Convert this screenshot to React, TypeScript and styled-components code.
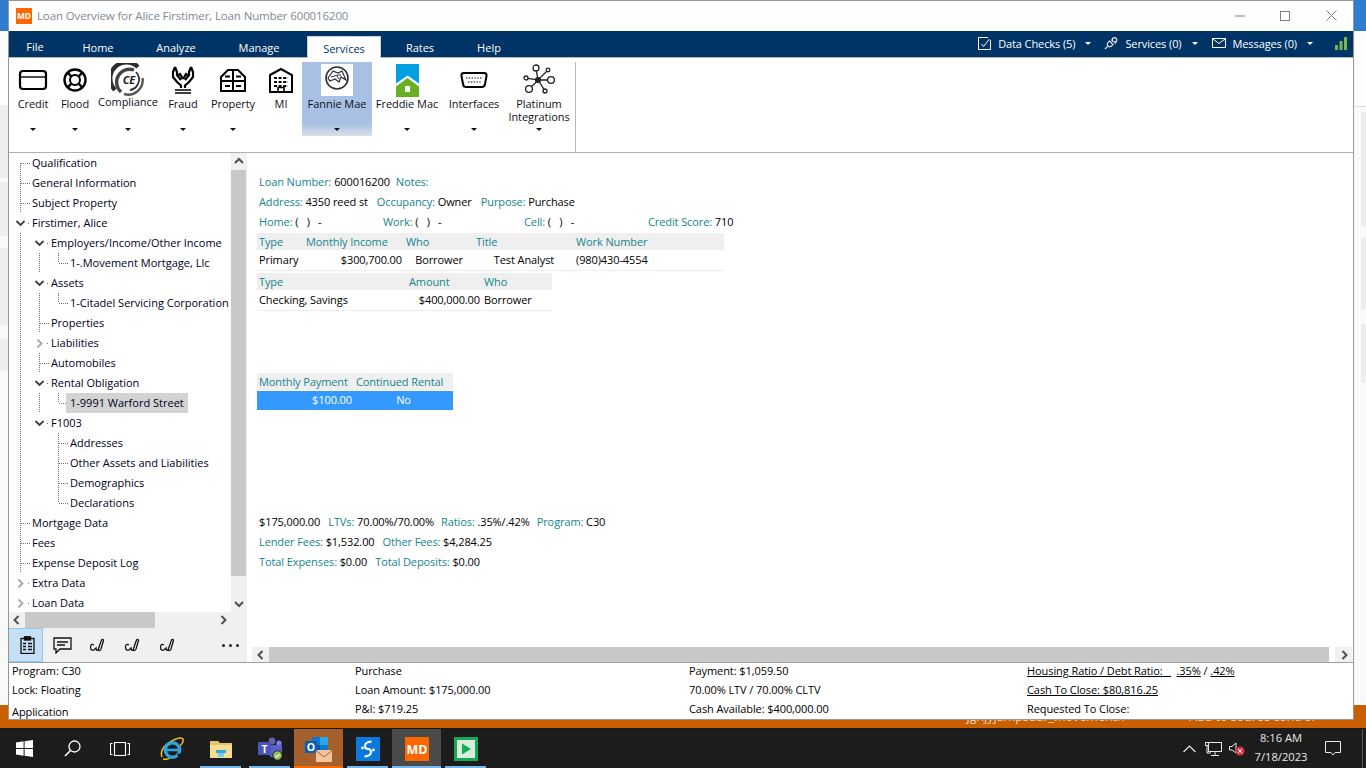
import React from "react";
import styled, { createGlobalStyle } from "styled-components";

const GlobalStyle = createGlobalStyle`
  html, body { margin: 0; padding: 0; background: #1c1c1c; overflow: hidden; }
  * { box-sizing: border-box; }
`;

const FONT = `"Open Sans", "Noto Sans", sans-serif`;
const TEAL = "#13858e";
const NAVY = "#003466";

const Screen = styled.div`
  width: 1366px;
  height: 768px;
  display: flex;
  flex-direction: column;
  font-family: ${FONT};
  font-size: 11px;
  color: #000;
  overflow: hidden;
`;

const Desktop = styled.div`
  height: 728px;
  display: flex;
`;

const Edge = styled.div<{ $w: number }>`
  width: ${(p) => p.$w}px;
  display: flex;
  flex-direction: column;
  background: #f8f9f9;
`;

const EdgeBlock = styled.div<{ $h: number; $bg: string; $inset?: number }>`
  height: ${(p) => p.$h}px;
  background: ${(p) => p.$bg};
  margin-left: ${(p) => p.$inset ?? 0}px;
`;

const EdgeFill = styled.div`
  flex: 1;
`;

const EdgeOrange = styled.div`
  height: 23px;
  background: #ca5f00;
`;

const Center = styled.div`
  width: 1346px;
  display: flex;
  flex-direction: column;
`;

const Window = styled.div`
  height: 720px;
  display: flex;
  flex-direction: column;
  background: #fff;
  outline: 1px solid #969696;
  outline-offset: -1px;
  position: relative;
`;

const DesktopStrip = styled.div`
  height: 8px;
  background: #ca5f00;
  overflow: hidden;
  display: flex;
  color: #f0d9c4;
  font-size: 12.5px;
  line-height: 12px;
  white-space: nowrap;
`;

const StripText = styled.span<{ $ml: number }>`
  margin-left: ${(p) => p.$ml}px;
  margin-top: -9px;
`;

/* title bar */
const TitleBar = styled.div`
  height: 31px;
  display: flex;
  align-items: center;
  padding-left: 8px;
  flex: none;
`;

const TitleText = styled.div`
  margin-left: 5px;
  font-size: 11.5px;
  color: #808890;
  flex: 1;
  letter-spacing: -0.13px;
`;

const WinButton = styled.div<{ $mr?: number }>`
  width: 45px;
  height: 31px;
  margin-right: ${(p) => p.$mr ?? 0}px;
  display: flex;
  align-items: center;
  justify-content: center;
`;

/* menu bar */
const MenuBar = styled.div`
  height: 27px;
  background: ${NAVY};
  border-bottom: 1px solid #b0b8c0;
  display: flex;
  align-items: flex-end;
  flex: none;
  color: #fff;
`;

const Tab = styled.div<{ $w: number; $active?: boolean; $ml?: number; $lh?: number }>`
  width: ${(p) => p.$w}px;
  margin-left: ${(p) => p.$ml ?? 0}px;
  height: 22px;
  margin-bottom: -1px;
  text-align: center;
  line-height: ${(p) => p.$lh ?? 24}px;
  background: ${(p) => (p.$active ? "#fff" : "transparent")};
  color: ${(p) => (p.$active ? NAVY : "#fff")};
  border: ${(p) => (p.$active ? "1px solid #c8d0d8" : "none")};
  border-bottom: none;
`;

const MenuRight = styled.div`
  margin-left: auto;
  height: 26px;
  display: flex;
  align-items: center;
  padding: 0 7px 2px 0;
  letter-spacing: -0.1px;
`;

const MenuItem = styled.div<{ $ml: number }>`
  display: flex;
  align-items: center;
  gap: 7px;
  margin-left: ${(p) => p.$ml}px;
`;

const MenuCaret = styled.div`
  width: 0;
  height: 0;
  margin-left: 3px;
  border-left: 3px solid transparent;
  border-right: 3px solid transparent;
  border-top: 3px solid #fff;
`;

/* ribbon */
const Ribbon = styled.div`
  height: 95px;
  flex: none;
  display: flex;
  padding: 4px 0 0 4px;
  border-bottom: 1px solid #b0b0b0;
`;

const RibbonGroup = styled.div`
  display: flex;
  height: 90px;
  padding-right: 3px;
  border-right: 1px solid #b8b8b8;
`;

const RibbonButton = styled.div<{ $w: number; $active?: boolean }>`
  width: ${(p) => p.$w}px;
  height: 74px;
  display: flex;
  flex-direction: column;
  align-items: center;
  background: ${(p) =>
    p.$active
      ? "linear-gradient(#a7c0e4 0, #a7c0e4 61px, #d9dfe8 74px)"
      : "transparent"};
`;

const RibbonIcon = styled.div`
  height: 34px;
  display: flex;
  align-items: center;
  justify-content: center;
  margin-top: 1px;
`;

const RibbonLabel = styled.div<{ $up?: boolean }>`
  height: 26px;
  margin-top: ${(p) => (p.$up ? -2 : 0)}px;
  margin-bottom: ${(p) => (p.$up ? 2 : 0)}px;
  line-height: 13px;
  text-align: center;
  white-space: pre-line;
  color: #101020;
  letter-spacing: -0.05px;
`;

const RibbonCaret = styled.div`
  width: 0;
  height: 0;
  margin-top: 5px;
  border-left: 3px solid transparent;
  border-right: 3px solid transparent;
  border-top: 3px solid #111;
`;

/* body */
const Body = styled.div`
  flex: none;
  height: 509px;
  display: flex;
`;

const LeftPanel = styled.div`
  width: 239px;
  background: #f0f0f0;
  display: flex;
  flex-direction: column;
`;

const TreeRow = styled.div`
  height: 459px;
  display: flex;
`;

const TreeViewport = styled.div`
  width: 223px;
  background: #fff;
  overflow: hidden;
  border-bottom-right-radius: 2px;
  white-space: nowrap;
`;

const Node = styled.div`
  height: 20px;
  display: flex;
`;

const NodeLabel = styled.span<{ $selected?: boolean }>`
  margin-left: -2px;
  padding: 0 4px;
  height: 20px;
  line-height: 20px;
  background: ${(p) => (p.$selected ? "#d3d3d3" : "transparent")};
  color: #000020;
`;

const VScroll = styled.div`
  width: 15px;
  display: flex;
  flex-direction: column;
`;

const ScrollArrow = styled.div<{ $h?: number; $w?: number }>`
  height: ${(p) => (p.$h ? `${p.$h}px` : "100%")};
  width: ${(p) => (p.$w ? `${p.$w}px` : "100%")};
  flex: none;
  display: flex;
  align-items: center;
  justify-content: center;
  background: #f0f0f0;
`;

const VThumb = styled.div`
  height: 406px;
  background: #c8c8c8;
`;

const ScrollTrack = styled.div`
  flex: 1;
`;

const HScroll = styled.div`
  height: 16px;
  width: 223px;
  display: flex;
`;

const HThumb = styled.div<{ $w: number }>`
  width: ${(p) => p.$w}px;
  flex: none;
  background: #c8c8c8;
`;

const ToolStrip = styled.div`
  height: 34px;
  display: flex;
  align-items: center;
`;

const ToolButton = styled.div<{ $active?: boolean }>`
  width: 35px;
  height: 34px;
  padding-left: 3px;
  display: flex;
  align-items: center;
  justify-content: center;
  background: ${(p) => (p.$active ? "#c5dff5" : "transparent")};
  border: 1px solid ${(p) => (p.$active ? "#90c8f4" : "transparent")};
`;

const ToolMore = styled.div`
  margin-left: auto;
  margin-right: 8px;
  display: flex;
  gap: 4px;
`;

const MoreDot = styled.i`
  width: 3px;
  height: 3px;
  border-radius: 50%;
  background: #222;
`;

const Main = styled.div`
  flex: 1;
  display: flex;
  flex-direction: column;
  min-width: 0;
`;

const Content = styled.div`
  flex: 1;
  padding: 19px 0 0 10px;
  overflow: hidden;
  letter-spacing: -0.1px;
`;

const InfoRow = styled.div`
  height: 20px;
  line-height: 20px;
  padding-left: 2px;
  display: flex;
  white-space: nowrap;
`;

const InfoItem = styled.span<{ $w?: number; $mr?: number }>`
  ${(p) => (p.$w ? `width: ${p.$w}px;` : "")}
  margin-right: ${(p) => p.$mr ?? 8}px;
  flex: none;
`;

const Key = styled.span`
  color: ${TEAL};
`;

const DataGrid = styled.div<{ $cols: string; $mt: number; $w: number }>`
  display: grid;
  grid-template-columns: ${(p) => p.$cols};
  width: ${(p) => p.$w}px;
  margin-top: ${(p) => p.$mt}px;
  white-space: nowrap;
`;

const HeadCell = styled.div`
  height: 17px;
  line-height: 18px;
  padding: 0 2px;
  background: #efefef;
  color: ${TEAL};
`;

const DataCell = styled.div<{ $align?: string }>`
  height: 21px;
  line-height: 20px;
  padding: 0 2px;
  text-align: ${(p) => p.$align ?? "left"};
  border-bottom: 1px solid #eeeeee;
`;

const SelectedCell = styled.div<{ $align?: string }>`
  height: 19px;
  margin-top: 1px;
  line-height: 18px;
  padding: 0 2px;
  text-align: ${(p) => p.$align ?? "left"};
  background: #3399ff;
  color: #fff;
`;

const Summary = styled.div`
  margin-top: 102px;
`;

const MainScroll = styled.div`
  height: 15px;
  flex: none;
  margin: 0 2px 0 5px;
  display: flex;
`;

/* status */
const Status = styled.div`
  flex: 1;
  border-top: 1px solid #a0a0a0;
  display: grid;
  grid-template-columns: 343px 334px 338px 1fr;
  padding: 0 0 0 4px;
  letter-spacing: -0.08px;
`;

const StatusCol = styled.div`
  display: flex;
  flex-direction: column;
`;

const StatusLine = styled.div<{ $mt?: number }>`
  height: 19px;
  line-height: 15px;
  margin-top: ${(p) => p.$mt ?? 0}px;
  white-space: pre;
`;

const Link = styled.span`
  text-decoration: underline;
`;

/* taskbar */
const Taskbar = styled.div`
  height: 40px;
  background: #1c1c1c;
  border-top: 1px solid #161616;
  display: flex;
  color: #e8e8e8;
`;

const TaskButton = styled.div<{
  $w?: number;
  $ml?: number;
  $bg?: string;
  $bar?: string;
  $barInset?: number;
}>`
  width: ${(p) => p.$w ?? 49}px;
  margin-left: ${(p) => p.$ml ?? 0}px;
  height: 39px;
  display: flex;
  align-items: center;
  justify-content: center;
  background: ${(p) => p.$bg ?? "transparent"};
  ${(p) =>
    p.$bar
      ? `background-image: linear-gradient(${p.$bar}, ${p.$bar});
         background-repeat: no-repeat;
         background-size: calc(100% - ${(p.$barInset ?? 0) * 2}px) 2px;
         background-position: center bottom;`
      : ""}
`;

const Tray = styled.div`
  margin-left: auto;
  display: flex;
  align-items: center;
  height: 39px;
`;

const TrayIcon = styled.div<{ $w: number }>`
  width: ${(p) => p.$w}px;
  display: flex;
  justify-content: center;
`;

const Clock = styled.div`
  width: 70px;
  text-align: center;
  font-size: 11.2px;
  line-height: 19px;
  margin-bottom: 3px;
`;

const ShowDesktop = styled.div`
  width: 4px;
  height: 39px;
  border-left: 1px solid #555;
  margin-left: 12px;
`;

/* icons */
const Chevron = ({ dir, color = "#505050" }: { dir: "up" | "down" | "left" | "right"; color?: string }) => {
  const d = {
    up: "M1 6 L5 2 L9 6",
    down: "M1 3 L5 7 L9 3",
    left: "M6.5 1 L2.5 5 L6.5 9",
    right: "M3.5 1 L7.5 5 L3.5 9",
  }[dir];
  return (
    <svg width="10" height="10" viewBox="0 0 10 10">
      <path d={d} fill="none" stroke={color} strokeWidth="2" />
    </svg>
  );
};

const Svg = styled.svg`
  display: block;
  flex: none;
`;

const LogoMd = ({ size }: { size: number }) => (
  <Svg width={size} height={size} viewBox="0 0 24 24">
    <rect width="24" height="24" fill="#ff6600" />
    <text x="12" y="16.5" textAnchor="middle" fontSize="12.5" fontWeight="700" fill="#fff" fontFamily={FONT}>
      MD
    </text>
  </Svg>
);

const CreditIcon = () => (
  <Svg width="30" height="24" viewBox="0 0 30 24" fill="none" stroke="#000" strokeWidth="2.2">
    <rect x="2" y="3" width="26" height="18" rx="3" />
    <path d="M2 9 H28" strokeWidth="1.4" />
  </Svg>
);

const FloodIcon = () => (
  <Svg width="26" height="26" viewBox="0 0 26 26" fill="none" stroke="#000">
    <circle cx="13" cy="13" r="10.5" strokeWidth="2.4" />
    <circle cx="13" cy="13" r="5" strokeWidth="2" />
    <path d="M6 6 L9.4 9.4 M20 6 L16.6 9.4 M6 20 L9.4 16.6 M20 20 L16.6 16.6" strokeWidth="2.4" />
  </Svg>
);

const ComplianceIcon = () => (
  <Svg width="34" height="34" viewBox="0 0 34 34" fill="none">
    <path d="M4 27 A15.5 15.5 0 0 1 27 4" stroke="#2c2c2c" strokeWidth="4.4" />
    <path d="M10 29 A13 13 0 0 1 23 7" stroke="#444" strokeWidth="3.4" />
    <path d="M13 31 A14.5 14.5 0 0 0 31.5 15" stroke="#555" strokeWidth="2.4" />
    <path d="M25 9 A11 11 0 0 1 27 21 M19 27 A10.5 10.5 0 0 0 27 21" stroke="#333" strokeWidth="1.8" />
    <text x="18" y="21" textAnchor="middle" fontSize="11" fontWeight="700" fontStyle="italic" fill="#222" fontFamily={FONT}>
      CE
    </text>
  </Svg>
);

const FraudIcon = () => (
  <Svg width="24" height="28" viewBox="0 0 24 28" fill="none" stroke="#000" strokeWidth="2.2">
    <path d="M4 1 L2 6 V11 L6 16 L10 19.5 V22 M4 1 L6 6 V9 L10 14 M6 10 L9 8 L12 13" />
    <path d="M20 1 L22 6 V11 L18 16 L14 19.5 V22 M20 1 L18 6 V9 L14 14 M18 10 L15 8 L12 13" />
    <path d="M4 24 H20 M4 27 H20" strokeWidth="1.6" />
  </Svg>
);

const PropertyIcon = () => (
  <Svg width="28" height="24" viewBox="0 0 28 24" fill="none" stroke="#000" strokeWidth="2">
    <path d="M2 9 L9 2 H19 L26 9 V23 H2 Z" />
    <path d="M14 2 V23 M2 13 H26" />
    <path d="M6 8.5 H11 M17 8.5 H22 M6 18 H11 M17 18 H22" strokeWidth="2" />
  </Svg>
);

const MiIcon = () => (
  <Svg width="26" height="26" viewBox="0 0 26 26" fill="none" stroke="#000" strokeWidth="2">
    <path d="M2 8 L13 2 L24 8 V25 H2 Z" />
    <path d="M6 11 H20 M6 15 H20 M6 19 H20" strokeWidth="2" strokeDasharray="3 1.6" />
    <path d="M10 25 V20.5 H16 V25" strokeWidth="1.6" />
  </Svg>
);

const FannieIcon = () => (
  <Svg width="32" height="32" viewBox="0 0 32 32" fill="none">
    <rect width="32" height="32" fill="#fff" />
    <circle cx="16" cy="14" r="11" stroke="#2a2e3a" strokeWidth="1.6" />
    <path d="M7 14 L12 7 L17 9 L21 7 L25 16 L20 13 L18 18 L14 15 L9 17 Z" stroke="#2a2e3a" strokeWidth="1.2" />
    <path d="M10 13 L17 11 L20 11 M16 12 L18 15" stroke="#2a2e3a" strokeWidth="1" />
  </Svg>
);

const FreddieIcon = () => (
  <Svg width="23" height="33" viewBox="0 0 23 33">
    <rect width="23" height="33" fill="#00a0e3" />
    <path d="M0 21 L11.5 14 L23 21 V33 H0 Z" fill="#6aae23" />
    <path d="M0 22.5 L11.5 14 L23 22.5 V19.5 L11.5 11.5 L0 19.5 Z" fill="#fff" />
    <rect x="9" y="22" width="5" height="6" fill="#fff" />
  </Svg>
);

const InterfacesIcon = () => (
  <Svg width="28" height="20" viewBox="0 0 28 20" fill="none">
    <path d="M4 3 H24 Q27 3 26.5 6 L25 14 Q24.5 17 22 17 H6 Q3.5 17 3 14 L1.5 6 Q1 3 4 3 Z" stroke="#000" strokeWidth="2" />
    <path d="M6 8 H23" stroke="#555" strokeWidth="1.4" strokeDasharray="1.4 1.4" />
    <path d="M8 12 H21" stroke="#555" strokeWidth="1.4" strokeDasharray="1.4 1.4" />
  </Svg>
);

const PlatinumIcon = () => (
  <Svg width="34" height="32" viewBox="0 0 34 32" fill="none" stroke="#222" strokeWidth="1.3">
    <circle cx="16" cy="16" r="2.4" fill="#222" />
    <circle cx="14" cy="4" r="3" />
    <circle cx="26" cy="6" r="1.8" />
    <circle cx="29" cy="16" r="3.4" />
    <circle cx="23" cy="27" r="2" />
    <circle cx="7" cy="25" r="3.4" />
    <circle cx="4" cy="14" r="2" />
    <path d="M15.6 13.6 L14.4 7 M17.6 14.4 L24.8 7.2 M18.4 16 H25.6 M17.4 18 L22 25.4 M14.4 18 L9.4 22.6 M13.6 15.6 L6 14.4" />
  </Svg>
);

const CheckBoxIcon = () => (
  <Svg width="13" height="13" viewBox="0 0 13 13" fill="none" stroke="#fff">
    <path d="M12.5 3 V12.5 H0.5 V0.5 H10" />
    <path d="M3.5 7 L5.5 9.5 L11.5 2" />
  </Svg>
);

const PlugIcon = () => (
  <Svg width="14" height="13" viewBox="0 0 14 13" fill="none" stroke="#e8e8f0" strokeWidth="1.1">
    <path d="M5.5 4 L9 7.5 L7.5 9 Q5.5 10.5 4 9 Q2.5 7.5 4 5.5 Z" />
    <path d="M3.5 9.5 L1 12 M9 1.5 L7.3 3.5 M12.5 5 L10.5 6.7" />
    <circle cx="10.5" cy="2.8" r="2.2" />
  </Svg>
);

const MailIcon = () => (
  <Svg width="14" height="10" viewBox="0 0 14 10" fill="none" stroke="#fff">
    <rect x="0.5" y="0.5" width="13" height="9" />
    <path d="M1 1 L7 5.5 L13 1" />
  </Svg>
);

const BarsIcon = () => (
  <Svg width="12" height="13" viewBox="0 0 12 13">
    <rect x="0" y="8" width="3" height="5" fill="#7ab648" />
    <rect x="4.5" y="4" width="3" height="9" fill="#7ab648" />
    <rect x="9" y="0" width="3" height="13" fill="#7ab648" />
  </Svg>
);

const ClipboardIcon = () => (
  <Svg width="15" height="18" viewBox="0 0 15 18" fill="none" stroke="#111" strokeWidth="1.3">
    <rect x="1" y="2.5" width="13" height="15" />
    <rect x="4.5" y="0.8" width="6" height="3.2" fill="#111" />
    <path d="M3 7.5 H6 M8 7.5 H12 M3 10.5 H6 M8 10.5 H12 M3 13.5 H6 M8 13.5 H12" strokeWidth="1.5" />
  </Svg>
);

const CommentIcon = () => (
  <Svg width="19" height="17" viewBox="0 0 19 17" fill="none" stroke="#111" strokeWidth="1.3">
    <path d="M1 1 H18 V12 H7 L3 16 V12 H1 Z" />
    <path d="M4 5 H15 M4 8 H12" />
  </Svg>
);

const SignIcon = () => (
  <Svg width="16" height="15" viewBox="0 0 16 15" fill="none" stroke="#111" strokeWidth="1.3">
    <path d="M5 7 Q2 5 1.5 9 Q1.5 13 5 12 L7 10 Q7 13 9 12" />
    <path d="M9 12 L12.5 2 Q14 0.5 14.5 2.5 L12 11 Q10.5 13.5 9 12 Z" />
  </Svg>
);

const WindowsIcon = () => (
  <Svg width="17" height="17" viewBox="0 0 17 17" fill="#fff">
    <path d="M0 2.4 L7.6 1.3 V8 H0 Z M8.6 1.2 L17 0 V8 H8.6 Z M0 9 H7.6 V15.7 L0 14.6 Z M8.6 9 H17 V17 L8.6 15.8 Z" />
  </Svg>
);

const SearchIcon = () => (
  <Svg width="17" height="17" viewBox="0 0 17 17" fill="none" stroke="#fff" strokeWidth="1.3">
    <circle cx="10.5" cy="6.5" r="5.5" />
    <path d="M6.5 10.5 L1 16" strokeWidth="1.6" />
  </Svg>
);

const TaskViewIcon = () => (
  <Svg width="20" height="14" viewBox="0 0 20 14" fill="none" stroke="#fff" strokeWidth="1.1">
    <rect x="4.5" y="0.5" width="11" height="13" />
    <path d="M2.5 1.5 H0.5 V12.5 H2.5 M17.5 1.5 H19.5 V12.5 H17.5" />
  </Svg>
);

const IeIcon = () => (
  <Svg width="24" height="24" viewBox="0 0 24 24" fill="none">
    <path d="M2 20 Q-1 12 10 5 Q20 -1 23 2 Q24 5 20 9" stroke="#e8b820" strokeWidth="1.6" />
    <path d="M3 22 Q6 23 10 21" stroke="#e8b820" strokeWidth="1.6" />
    <circle cx="12.5" cy="13" r="7.2" stroke="#2ea4e0" strokeWidth="3.4" />
    <path d="M5 13 H21" stroke="#2ea4e0" strokeWidth="2.6" />
    <path d="M18 17 L21 20" stroke="#1c1c1c" strokeWidth="3" />
  </Svg>
);

const FolderIcon = () => (
  <Svg width="22" height="18" viewBox="0 0 22 18">
    <path d="M0 1 H8 L10 3 H22 V18 H0 Z" fill="#e8c469" />
    <rect y="5" width="22" height="13" fill="#f6de93" />
    <rect x="6" y="10" width="10" height="3" fill="#3aa4dd" />
    <rect x="8" y="13" width="6" height="4" fill="#7ccbf0" />
  </Svg>
);

const TeamsIcon = () => (
  <Svg width="26" height="24" viewBox="0 0 26 24">
    <circle cx="15" cy="4" r="3.4" fill="#6264a7" />
    <circle cx="22" cy="6" r="2.6" fill="#7b83eb" />
    <path d="M11 8 H25 V16 Q25 21 18 21 Q11 21 11 14 Z" fill="#5b5fc7" />
    <rect x="1" y="5" width="13" height="13" rx="1" fill="#4b53bc" />
    <text x="7.5" y="15.5" textAnchor="middle" fontSize="10.5" fontWeight="700" fill="#fff" fontFamily={FONT}>
      T
    </text>
    <circle cx="20.5" cy="18.5" r="5" fill="#1c1c1c" />
    <circle cx="20.5" cy="18.5" r="4.2" fill="#92c353" />
    <path d="M18.5 18.5 L20 20 L22.6 17.2" stroke="#fff" strokeWidth="1.1" fill="none" />
  </Svg>
);

const OutlookIcon = () => (
  <Svg width="27" height="27" viewBox="0 0 27 27">
    <rect x="7" y="2" width="16" height="16" fill="#0f78d4" />
    <rect x="15" y="2" width="8" height="8" fill="#28a8ea" />
    <rect x="7" y="10" width="8" height="8" fill="#0358a7" />
    <rect y="6" width="12" height="12" fill="#0a5fb0" />
    <text x="6" y="16" textAnchor="middle" fontSize="10.5" fontWeight="700" fill="#fff" fontFamily={FONT}>
      O
    </text>
    <rect x="11" y="15" width="16" height="12" fill="#f4c59c" />
    <path d="M11 15.5 L19 22 L27 15.5" stroke="#a5602c" strokeWidth="1" fill="none" />
  </Svg>
);

const SsoIcon = () => (
  <Svg width="24" height="24" viewBox="0 0 24 24" fill="none">
    <rect width="24" height="24" fill="#0a78dc" />
    <path d="M15.5 4.5 Q9 5 9 9 Q9 12 12 12 Q15 12 15 15 Q15 19 8.5 19.5" stroke="#fff" strokeWidth="2" />
    <circle cx="6.5" cy="11" r="1.4" fill="#fff" />
    <circle cx="17.5" cy="13" r="1.4" fill="#fff" />
  </Svg>
);

const PlayIcon = () => (
  <Svg width="24" height="24" viewBox="0 0 24 24">
    <rect width="24" height="24" fill="#18a957" />
    <rect x="3" y="3" width="18" height="18" fill="#d8efe0" />
    <path d="M8 6.5 L17 12 L8 17.5 Z" fill="#18a957" />
  </Svg>
);

/* tree */
type Conn = "first" | "tee" | "end" | "open" | "closed";

const TreeGuide = ({ on }: { on: boolean }) => (
  <Svg width="19" height="20">
    {on && <line x1="12.5" y1="0" x2="12.5" y2="20" stroke="#707070" strokeDasharray="1 1" />}
  </Svg>
);

const TreeConnector = ({ kind }: { kind: Conn }) => (
  <Svg width="22" height="20" fill="none">
    {kind === "first" && <line x1="12.5" y1="10" x2="12.5" y2="20" stroke="#707070" strokeDasharray="1 1" />}
    {kind === "tee" && <line x1="12.5" y1="0" x2="12.5" y2="20" stroke="#707070" strokeDasharray="1 1" />}
    {kind === "end" && <line x1="12.5" y1="0" x2="12.5" y2="10" stroke="#707070" strokeDasharray="1 1" />}
    {(kind === "first" || kind === "tee" || kind === "end") && (
      <line x1="13" y1="10.5" x2="22" y2="10.5" stroke="#707070" strokeDasharray="1 1" />
    )}
    {kind === "open" && (
      <>
        <path d="M8.5 8 L12.5 12 L16.5 8" stroke="#404040" strokeWidth="1.8" />
        <line x1="20" y1="10.5" x2="21" y2="10.5" stroke="#707070" />
      </>
    )}
    {kind === "closed" && (
      <>
        <path d="M10.5 6.5 L14.5 10.5 L10.5 14.5" stroke="#a8a8a8" strokeWidth="1.8" />
        <line x1="20" y1="10.5" x2="21" y2="10.5" stroke="#707070" />
      </>
    )}
  </Svg>
);

const treeNodes: { label: string; guides: boolean[]; kind: Conn; selected?: boolean }[] = [
  { label: "Qualification", guides: [], kind: "first" },
  { label: "General Information", guides: [], kind: "tee" },
  { label: "Subject Property", guides: [], kind: "tee" },
  { label: "Firstimer, Alice", guides: [], kind: "open" },
  { label: "Employers/Income/Other Income", guides: [true], kind: "open" },
  { label: "1-.Movement Mortgage, Llc", guides: [true, true], kind: "end" },
  { label: "Assets", guides: [true], kind: "open" },
  { label: "1-Citadel Servicing Corporation", guides: [true, true], kind: "end" },
  { label: "Properties", guides: [true], kind: "tee" },
  { label: "Liabilities", guides: [true], kind: "closed" },
  { label: "Automobiles", guides: [true], kind: "tee" },
  { label: "Rental Obligation", guides: [true], kind: "open" },
  { label: "1-9991 Warford Street", guides: [true, true], kind: "end", selected: true },
  { label: "F1003", guides: [true], kind: "open" },
  { label: "Addresses", guides: [true, false], kind: "tee" },
  { label: "Other Assets and Liabilities", guides: [true, false], kind: "tee" },
  { label: "Demographics", guides: [true, false], kind: "tee" },
  { label: "Declarations", guides: [true, false], kind: "end" },
  { label: "Mortgage Data", guides: [], kind: "tee" },
  { label: "Fees", guides: [], kind: "tee" },
  { label: "Expense Deposit Log", guides: [], kind: "tee" },
  { label: "Extra Data", guides: [], kind: "closed" },
  { label: "Loan Data", guides: [], kind: "closed" },
];

const ribbonItems = [
  { label: "Credit", w: 42, icon: <CreditIcon /> },
  { label: "Flood", w: 42, icon: <FloodIcon /> },
  { label: "Compliance", w: 64, icon: <ComplianceIcon />, up: true },
  { label: "Fraud", w: 46, icon: <FraudIcon /> },
  { label: "Property", w: 54, icon: <PropertyIcon /> },
  { label: "MI", w: 42, icon: <MiIcon />, noCaret: true },
  { label: "Fannie Mae", w: 70, icon: <FannieIcon />, active: true },
  { label: "Freddie Mac", w: 70, icon: <FreddieIcon /> },
  { label: "Interfaces", w: 64, icon: <InterfacesIcon /> },
  { label: "Platinum\nIntegrations", w: 66, icon: <PlatinumIcon /> },
];

export default function App() {
  return (
    <Screen>
      <GlobalStyle />
      <Desktop>
        <Edge $w={8}>
          <EdgeBlock $h={31} $bg="#2f7dd0" />
          <EdgeBlock $h={74} $bg="#fdfdfd" />
          <EdgeBlock $h={73} $bg="#edeeef" />
          <EdgeBlock $h={4} $bg="#f8f9f9" />
          <EdgeBlock $h={54} $bg="#edeeef" />
          <EdgeBlock $h={12} $bg="#f8f9f9" />
          <EdgeBlock $h={77} $bg="#edeeef" />
          <EdgeBlock $h={14} $bg="#f8f9f9" />
          <EdgeBlock $h={32} $bg="#edeeef" />
          <EdgeFill />
          <EdgeOrange />
        </Edge>
        <Center>
          <Window>
            <TitleBar>
              <LogoMd size={16} />
              <TitleText>Loan Overview for Alice Firstimer, Loan Number 600016200</TitleText>
              <WinButton>
                <Svg width="10" height="2">
                  <rect y="0.5" width="10" height="1" fill="#808080" />
                </Svg>
              </WinButton>
              <WinButton $mr={2}>
                <Svg width="10" height="10">
                  <rect x="0.5" y="0.5" width="9" height="9" fill="none" stroke="#808080" />
                </Svg>
              </WinButton>
              <WinButton>
                <Svg width="11" height="11">
                  <path d="M0.5 0.5 L10.5 10.5 M10.5 0.5 L0.5 10.5" stroke="#808080" fill="none" />
                </Svg>
              </WinButton>
            </TitleBar>
            <MenuBar>
              <Tab $w={54} $lh={22}>
                File
              </Tab>
              <Tab $w={72}>Home</Tab>
              <Tab $w={84}>Analyze</Tab>
              <Tab $w={82}>Manage</Tab>
              <Tab $w={74} $ml={7} $active>
                Services
              </Tab>
              <Tab $w={78}>Rates</Tab>
              <Tab $w={60}>Help</Tab>
              <MenuRight>
                <MenuItem $ml={0}>
                  <CheckBoxIcon />
                  <span>Data Checks (5)</span>
                  <MenuCaret />
                </MenuItem>
                <MenuItem $ml={13}>
                  <PlugIcon />
                  <span>Services (0)</span>
                  <MenuCaret />
                </MenuItem>
                <MenuItem $ml={14}>
                  <MailIcon />
                  <span>Messages (0)</span>
                  <MenuCaret />
                </MenuItem>
                <MenuItem $ml={22}>
                  <BarsIcon />
                </MenuItem>
              </MenuRight>
            </MenuBar>
            <Ribbon>
              <RibbonGroup>
                {ribbonItems.map((item) => (
                  <RibbonButton key={item.label} $w={item.w} $active={item.active}>
                    <RibbonIcon>{item.icon}</RibbonIcon>
                    <RibbonLabel $up={item.up}>{item.label}</RibbonLabel>
                    {!item.noCaret && <RibbonCaret />}
                  </RibbonButton>
                ))}
              </RibbonGroup>
            </Ribbon>
            <Body>
              <LeftPanel>
                <TreeRow>
                  <TreeViewport>
                    {treeNodes.map((n) => (
                      <Node key={n.label}>
                        {n.guides.map((g, i) => (
                          <TreeGuide key={i} on={g} />
                        ))}
                        <TreeConnector kind={n.kind} />
                        <NodeLabel $selected={n.selected}>{n.label}</NodeLabel>
                      </Node>
                    ))}
                  </TreeViewport>
                  <VScroll>
                    <ScrollArrow $h={17}>
                      <Chevron dir="up" />
                    </ScrollArrow>
                    <VThumb />
                    <ScrollTrack />
                    <ScrollArrow $h={17}>
                      <Chevron dir="down" />
                    </ScrollArrow>
                  </VScroll>
                </TreeRow>
                <HScroll>
                  <ScrollArrow $w={17}>
                    <Chevron dir="left" />
                  </ScrollArrow>
                  <HThumb $w={130} />
                  <ScrollTrack />
                  <ScrollArrow $w={17}>
                    <Chevron dir="right" />
                  </ScrollArrow>
                </HScroll>
                <ToolStrip>
                  <ToolButton $active>
                    <ClipboardIcon />
                  </ToolButton>
                  <ToolButton>
                    <CommentIcon />
                  </ToolButton>
                  <ToolButton>
                    <SignIcon />
                  </ToolButton>
                  <ToolButton>
                    <SignIcon />
                  </ToolButton>
                  <ToolButton>
                    <SignIcon />
                  </ToolButton>
                  <ToolMore>
                    <MoreDot />
                    <MoreDot />
                    <MoreDot />
                  </ToolMore>
                </ToolStrip>
              </LeftPanel>
              <Main>
                <Content>
                  <InfoRow>
                    <InfoItem $mr={6}>
                      <Key>Loan Number:</Key> 600016200
                    </InfoItem>
                    <InfoItem>
                      <Key>Notes:</Key>
                    </InfoItem>
                  </InfoRow>
                  <InfoRow>
                    <InfoItem $mr={9}>
                      <Key>Address:</Key> 4350 reed st
                    </InfoItem>
                    <InfoItem $mr={9}>
                      <Key>Occupancy:</Key> Owner
                    </InfoItem>
                    <InfoItem>
                      <Key>Purpose:</Key> Purchase
                    </InfoItem>
                  </InfoRow>
                  <InfoRow>
                    <InfoItem $w={124} $mr={0}>
                      <Key>Home:</Key> ( &nbsp;&nbsp;) &nbsp;&nbsp;-
                    </InfoItem>
                    <InfoItem $w={141} $mr={0}>
                      <Key>Work:</Key> ( &nbsp;&nbsp;) &nbsp;&nbsp;-
                    </InfoItem>
                    <InfoItem $w={124} $mr={0}>
                      <Key>Cell:</Key> ( &nbsp;&nbsp;) &nbsp;&nbsp;-
                    </InfoItem>
                    <InfoItem>
                      <Key>Credit Score:</Key> 710
                    </InfoItem>
                  </InfoRow>
                  <DataGrid $cols="47px 100px 70px 100px 150px" $w={467} $mt={1}>
                    <HeadCell>Type</HeadCell>
                    <HeadCell>Monthly Income</HeadCell>
                    <HeadCell>Who</HeadCell>
                    <HeadCell>Title</HeadCell>
                    <HeadCell>Work Number</HeadCell>
                    <DataCell>Primary</DataCell>
                    <DataCell $align="right">$300,700.00</DataCell>
                    <DataCell $align="center">Borrower</DataCell>
                    <DataCell $align="center">Test Analyst</DataCell>
                    <DataCell>(980)430-4554</DataCell>
                  </DataGrid>
                  <DataGrid $cols="150px 75px 70px" $w={295} $mt={2}>
                    <HeadCell>Type</HeadCell>
                    <HeadCell>Amount</HeadCell>
                    <HeadCell>Who</HeadCell>
                    <DataCell>Checking, Savings</DataCell>
                    <DataCell $align="right">$400,000.00</DataCell>
                    <DataCell>Borrower</DataCell>
                  </DataGrid>
                  <DataGrid $cols="97px 99px" $w={196} $mt={62}>
                    <HeadCell>Monthly Payment</HeadCell>
                    <HeadCell>Continued Rental</HeadCell>
                    <SelectedCell $align="right">$100.00</SelectedCell>
                    <SelectedCell $align="center">No</SelectedCell>
                  </DataGrid>
                  <Summary>
                    <InfoRow>
                      <InfoItem>$175,000.00</InfoItem>
                      <InfoItem $mr={7}>
                        <Key>LTVs:</Key> 70.00%/70.00%
                      </InfoItem>
                      <InfoItem $mr={7}>
                        <Key>Ratios:</Key> .35%/.42%
                      </InfoItem>
                      <InfoItem>
                        <Key>Program:</Key> C30
                      </InfoItem>
                    </InfoRow>
                    <InfoRow>
                      <InfoItem>
                        <Key>Lender Fees:</Key> $1,532.00
                      </InfoItem>
                      <InfoItem>
                        <Key>Other Fees:</Key> $4,284.25
                      </InfoItem>
                    </InfoRow>
                    <InfoRow>
                      <InfoItem>
                        <Key>Total Expenses:</Key> $0.00
                      </InfoItem>
                      <InfoItem>
                        <Key>Total Deposits:</Key> $0.00
                      </InfoItem>
                    </InfoRow>
                  </Summary>
                </Content>
                <MainScroll>
                  <ScrollArrow $w={17}>
                    <Chevron dir="left" />
                  </ScrollArrow>
                  <HThumb $w={1060} />
                  <ScrollTrack />
                  <ScrollArrow $w={17}>
                    <Chevron dir="right" />
                  </ScrollArrow>
                </MainScroll>
              </Main>
            </Body>
            <Status>
              <StatusCol>
                <StatusLine>Program: C30</StatusLine>
                <StatusLine>Lock: Floating</StatusLine>
                <StatusLine $mt={3}>Application</StatusLine>
              </StatusCol>
              <StatusCol>
                <StatusLine>Purchase</StatusLine>
                <StatusLine>Loan Amount: $175,000.00</StatusLine>
                <StatusLine>P&amp;I: $719.25</StatusLine>
              </StatusCol>
              <StatusCol>
                <StatusLine>Payment: $1,059.50</StatusLine>
                <StatusLine>70.00% LTV / 70.00% CLTV</StatusLine>
                <StatusLine>Cash Available: $400,000.00</StatusLine>
              </StatusCol>
              <StatusCol>
                <StatusLine>
                  <Link>Housing Ratio / Debt Ratio:{"   "}</Link>{"  "}<Link>.35%</Link> / <Link>.42%</Link>
                </StatusLine>
                <StatusLine>
                  <Link>Cash To Close: $80,816.25</Link>
                </StatusLine>
                <StatusLine>Requested To Close:</StatusLine>
              </StatusCol>
            </Status>
          </Window>
          <DesktopStrip>
            <StripText $ml={903}>—</StripText>
            <StripText $ml={43}>jgnjyjampsuar_movementh</StripText>
            <StripText $ml={54}>+ Add to source control</StripText>
          </DesktopStrip>
        </Center>
        <Edge $w={12}>
          <EdgeBlock $h={31} $bg="#2f7dd0" />
          <EdgeBlock $h={75} $bg="#fdfdfd" />
          <EdgeBlock $h={1} $bg="#dddddd" />
          <EdgeBlock $h={5} $bg="#f8f9f9" />
          <EdgeBlock $h={114} $bg="#edeeef" $inset={7} />
          <EdgeBlock $h={12} $bg="#f8f9f9" />
          <EdgeBlock $h={72} $bg="#edeeef" $inset={7} />
          <EdgeBlock $h={14} $bg="#f8f9f9" />
          <EdgeBlock $h={59} $bg="#edeeef" $inset={7} />
          <EdgeFill />
          <EdgeOrange />
        </Edge>
      </Desktop>
      <Taskbar>
        <TaskButton $w={48}>
          <WindowsIcon />
        </TaskButton>
        <TaskButton $w={48}>
          <SearchIcon />
        </TaskButton>
        <TaskButton $w={48}>
          <TaskViewIcon />
        </TaskButton>
        <TaskButton $ml={3}>
          <IeIcon />
        </TaskButton>
        <TaskButton $bar="#76b9ed" $barInset={4}>
          <FolderIcon />
        </TaskButton>
        <TaskButton $bar="#76b9ed" $barInset={4}>
          <TeamsIcon />
        </TaskButton>
        <TaskButton $bg="#a5602c" $bar="#ff6a00">
          <OutlookIcon />
        </TaskButton>
        <TaskButton $bar="#76b9ed" $barInset={4}>
          <SsoIcon />
        </TaskButton>
        <TaskButton $bg="#4a4a4a" $bar="#76b9ed">
          <LogoMd size={24} />
        </TaskButton>
        <TaskButton $bar="#76b9ed" $barInset={4}>
          <PlayIcon />
        </TaskButton>
        <Tray>
          <TrayIcon $w={18}>
            <Svg width="13" height="8" fill="none">
              <path d="M0.5 7 L6.5 1 L12.5 7" stroke="#e8e8e8" strokeWidth="1.2" />
            </Svg>
          </TrayIcon>
          <TrayIcon $w={30}>
            <Svg width="17" height="14" fill="none" stroke="#e8e8e8">
              <rect x="3.5" y="0.5" width="13" height="9" />
              <path d="M10 10 V13 M6 13.5 H14 M0.5 0.5 H3.5 V3.5 H0.5 Z M2 4 V11 H6" />
            </Svg>
          </TrayIcon>
          <TrayIcon $w={18}>
            <Svg width="16" height="14" fill="none">
              <path d="M0.5 4.5 H3 L7 1 V11 L3 8 H0.5 Z" stroke="#e8e8e8" />
              <circle cx="11" cy="9" r="4.5" fill="#e03040" />
              <path d="M9 7 L13 11 M13 7 L9 11" stroke="#fff" />
            </Svg>
          </TrayIcon>
          <Clock>
            8:16 AM
            <br />
            7/18/2023
          </Clock>
          <TrayIcon $w={34}>
            <Svg width="16" height="15" fill="none" stroke="#e8e8e8">
              <path d="M0.5 0.5 H15.5 V11.5 H10 L8 14 L6 11.5 H0.5 Z" />
            </Svg>
          </TrayIcon>
          <ShowDesktop />
        </Tray>
      </Taskbar>
    </Screen>
  );
}
